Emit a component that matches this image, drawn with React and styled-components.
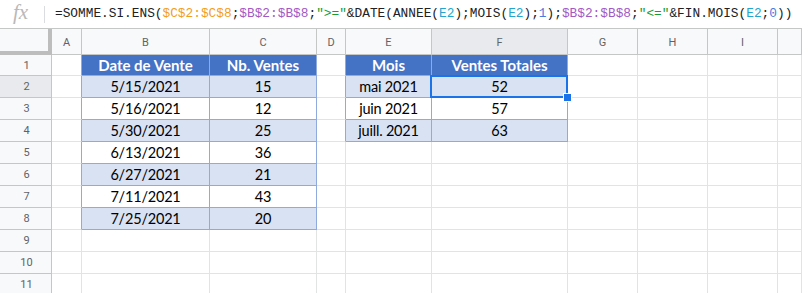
import React from 'react'
import styled, {createGlobalStyle} from 'styled-components'

const GRID = '#e2e3e3'
const HEAD_LINE = '#c4c7c5'
const TABLE_LINE = '#8faadc'

const GlobalStyle = createGlobalStyle`
  html, body {
    margin: 0;
    padding: 0;
    background: #ffffff;
    overflow: hidden;
  }
  #root {
    width: 802px;
    height: 293px;
    overflow: hidden;
  }
`

const COLS = ['A', 'B', 'C', 'D', 'E', 'F', 'G', 'H', 'I', 'J']

const sales = [
  ['5/15/2021', '15'],
  ['5/16/2021', '12'],
  ['5/30/2021', '25'],
  ['6/13/2021', '36'],
  ['6/27/2021', '21'],
  ['7/11/2021', '43'],
  ['7/25/2021', '20'],
]

const totals = [
  ['mai 2021', '52'],
  ['juin 2021', '57'],
  ['juill. 2021', '63'],
]

// contents of the two small tables, keyed "B1", "E3"...
const cells = {B1: 'Date de Vente', C1: 'Nb. Ventes', E1: 'Mois', F1: 'Ventes Totales'}
sales.forEach(([d, n], i) => { cells['B' + (i + 2)] = d; cells['C' + (i + 2)] = n })
totals.forEach(([m, t], i) => { cells['E' + (i + 2)] = m; cells['F' + (i + 2)] = t })

const inTable = (col, row) => {
  if ((col === 'B' || col === 'C') && row >= 1 && row <= 8) return true
  if ((col === 'E' || col === 'F') && row >= 1 && row <= 4) return true
  return false
}

const formula = [
  ['=SOMME.SI.ENS(', 'plain'],
  ['$C$2:$C$8', 'orange'],
  [';', 'plain'],
  ['$B$2:$B$8', 'purple'],
  [';', 'plain'],
  ['">="', 'green'],
  ['&DATE(ANNEE(', 'plain'],
  ['E2', 'cyan'],
  [');MOIS(', 'plain'],
  ['E2', 'cyan'],
  [');', 'plain'],
  ['1', 'number'],
  [');', 'plain'],
  ['$B$2:$B$8', 'purple'],
  [';', 'plain'],
  ['"<="', 'green'],
  ['&FIN.MOIS(', 'plain'],
  ['E2', 'cyan'],
  [';', 'plain'],
  ['0', 'number'],
  ['))', 'plain'],
]

const tokenColors = {
  plain: '#202124',
  orange: '#f29e1d',
  purple: '#a259c4',
  green: '#1a9a33',
  cyan: '#21a6cf',
  number: '#4a7be0',
}

const App = () => {
  const rows = Array.from({length: 11}, (_, i) => i + 1)

  return (
    <>
      <GlobalStyle />
      <Sheet>
        <FormulaBar>
          <FxIcon>fx</FxIcon>
          <Divider />
          <Formula>
            {formula.map(([t, kind], i) => (
              <Token key={i} $color={tokenColors[kind]}>{t}</Token>
            ))}
          </Formula>
        </FormulaBar>

        <Grid>
          <Corner />
          {COLS.map(c => (
            <ColHead key={c} $active={c === 'F'}>{c === 'J' ? '' : c}</ColHead>
          ))}

          {rows.map(r => (
            <React.Fragment key={r}>
              <RowHead $active={r === 2}>{r}</RowHead>
              {COLS.map((c, ci) => {
                const here = inTable(c, r)
                const next = COLS[ci + 1]
                const rightBlue = here || (next && inTable(next, r))
                const bottomBlue = here || inTable(c, r + 1)
                let kind = 'empty'
                if (here) kind = r === 1 ? 'head' : r % 2 === 0 ? 'band' : 'white'
                return (
                  <Cell
                    key={c}
                    $kind={kind}
                    $rightLine={rightBlue ? TABLE_LINE : GRID}
                    $bottomLine={bottomBlue ? TABLE_LINE : GRID}
                  >
                    {cells[c + r] || ''}
                    {c === 'F' && r === 2 && (
                      <Selection>
                        <Handle />
                      </Selection>
                    )}
                  </Cell>
                )
              })}
            </React.Fragment>
          ))}
        </Grid>
      </Sheet>
    </>
  )
}

export default App

const Sheet = styled.div`
  width: 802px;
  height: 293px;
  overflow: hidden;
  background: #fff;
`

const FormulaBar = styled.div`
  height: 29px;
  box-sizing: border-box;
  display: flex;
  align-items: center;
  border-bottom: 1px solid ${HEAD_LINE};
  background: #fff;
`

const FxIcon = styled.span`
  width: 44px;
  padding-left: 13px;
  box-sizing: border-box;
  font-family: "Liberation Serif", "DejaVu Serif", serif;
  font-style: italic;
  font-size: 21px;
  color: #b9b9b9;
  line-height: 1;
  margin-top: -3px;
`

const Divider = styled.span`
  width: 1px;
  height: 17px;
  background: #dadce0;
  margin-right: 10px;
`

const Formula = styled.div`
  font-family: "Liberation Mono", "DejaVu Sans Mono", monospace;
  font-size: 12.8px;
  white-space: nowrap;
  color: #202124;
  margin-top: -2px;
`

const Token = styled.span`
  color: ${p => p.$color};
`

const Grid = styled.div`
  display: grid;
  grid-template-columns: 52px 30px 128px 107px 29px 86px 136px 70px 70px 70px 1fr;
  grid-template-rows: 26px 21px repeat(10, 22px);
`

const Corner = styled.div`
  box-sizing: border-box;
  background: #f8f9fa;
  border-right: 4px solid #bdbdbd;
  border-bottom: 4px solid #bdbdbd;
`

const ColHead = styled.div`
  box-sizing: border-box;
  display: flex;
  align-items: center;
  justify-content: center;
  background: ${p => (p.$active ? '#e8eaed' : '#f8f9fa')};
  border-right: 1px solid ${HEAD_LINE};
  border-bottom: 1px solid ${HEAD_LINE};
  font-family: Roboto, "Liberation Sans", sans-serif;
  font-size: 11px;
  color: #5f6368;
  padding-top: 1px;
`

const RowHead = styled.div`
  box-sizing: border-box;
  display: flex;
  align-items: center;
  justify-content: center;
  background: ${p => (p.$active ? '#e8eaed' : '#f8f9fa')};
  border-right: 1px solid ${HEAD_LINE};
  border-bottom: 1px solid ${HEAD_LINE};
  font-family: Roboto, "Liberation Sans", sans-serif;
  font-size: 11px;
  color: #5f6368;
  padding-left: 2px;
`

const cellBackgrounds = {
  head: '#4472c4',
  band: '#d9e2f3',
  white: '#ffffff',
  empty: '#ffffff',
}

const Cell = styled.div`
  position: relative;
  box-sizing: border-box;
  display: flex;
  align-items: center;
  justify-content: center;
  white-space: nowrap;
  background: ${p => cellBackgrounds[p.$kind]};
  border-right: 1px solid ${p => p.$rightLine};
  border-bottom: 1px solid ${p => p.$bottomLine};
  font-family: Lato, "Open Sans", sans-serif;
  font-size: ${p => (p.$kind === 'head' ? '15px' : '14.5px')};
  letter-spacing: ${p => (p.$kind === 'head' ? '0' : '-0.2px')};
  font-weight: ${p => (p.$kind === 'head' ? 700 : 400)};
  color: ${p => (p.$kind === 'head' ? '#ffffff' : '#000000')};
`

const Selection = styled.div`
  position: absolute;
  z-index: 2;
  left: -2px;
  top: -1px;
  right: -1px;
  bottom: -1px;
  border: 2px solid #1a73e8;
  pointer-events: none;
`

const Handle = styled.div`
  position: absolute;
  right: -6px;
  bottom: -6px;
  width: 7px;
  height: 7px;
  background: #1a73e8;
  border: 1px solid #ffffff;
`
